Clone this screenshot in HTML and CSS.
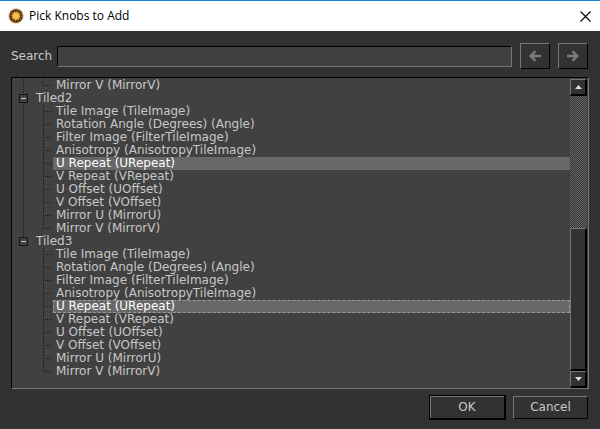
FILE: index.html
```html
<!DOCTYPE html>
<html lang="en" dir="ltr">

<head>
  <meta charset="utf-8">
  <title>Pick Knobs to Add</title>
  <link rel="stylesheet" href="styles.css">
  <meta name="viewport" content="width=device-width, initial-scale=1.0">
</head>

<body>
  <header class="titlebar">
    <svg class="logo" viewBox="0 0 16 16" width="16" height="16" aria-hidden="true">
      <circle cx="8" cy="8" r="7.8" fill="#f3c27a"/>
      <circle cx="8" cy="8" r="6.7" fill="#35281f"/>
      <circle cx="8" cy="8" r="5.2" fill="none" stroke="#b98a45" stroke-width="1.6" stroke-dasharray="1 1.720"/>
      <circle cx="8" cy="8" r="4" fill="#f5ac35"/>
      <circle cx="8" cy="8" r="2.2" fill="#ffc655"/>
    </svg>
    <h1>Pick Knobs to Add</h1>
    <button class="close" aria-label="Close">
      <svg viewBox="0 0 11 11" width="11" height="11"><path d="M.5.5l10 10M10.500.5l-10 10" stroke="#000" stroke-width="1.1"/></svg>
    </button>
  </header>
  <main class="dialog">
    <div class="search">
      <label for="search">Search</label>
      <input type="text" id="search">
      <button class="btn nav" aria-label="Previous">
        <svg viewBox="0 0 12 12" width="12" height="12"><path d="M6.500 1.200L1.800 6l4.700 4.800M2 6h10" fill="none" stroke="#7c7c7c" stroke-width="2.400"/></svg>
      </button>
      <button class="btn nav" aria-label="Next">
        <svg viewBox="0 0 12 12" width="12" height="12"><path d="M5.500 1.200L10.200 6l-4.700 4.800M10 6H0" fill="none" stroke="#7c7c7c" stroke-width="2.400"/></svg>
      </button>
    </div>
    <div class="list">
      <ul class="tree">
        <li class="group">
          <ul class="knobs">
            <li><span>Mirror V (MirrorV)</span></li>
          </ul>
        </li>
        <li class="group">
          <div class="node"><button class="toggle" aria-label="Collapse Tiled2"></button>Tiled2</div>
          <ul class="knobs">
            <li><span>Tile Image (TileImage)</span></li>
            <li><span>Rotation Angle (Degrees) (Angle)</span></li>
            <li><span>Filter Image (FilterTileImage)</span></li>
            <li><span>Anisotropy (AnisotropyTileImage)</span></li>
            <li><span class="selected">U Repeat (URepeat)</span></li>
            <li><span>V Repeat (VRepeat)</span></li>
            <li><span>U Offset (UOffset)</span></li>
            <li><span>V Offset (VOffset)</span></li>
            <li><span>Mirror U (MirrorU)</span></li>
            <li><span>Mirror V (MirrorV)</span></li>
          </ul>
        </li>
        <li class="group">
          <div class="node"><button class="toggle" aria-label="Collapse Tiled3"></button>Tiled3</div>
          <ul class="knobs">
            <li><span>Tile Image (TileImage)</span></li>
            <li><span>Rotation Angle (Degrees) (Angle)</span></li>
            <li><span>Filter Image (FilterTileImage)</span></li>
            <li><span>Anisotropy (AnisotropyTileImage)</span></li>
            <li><span class="selected current">U Repeat (URepeat)</span></li>
            <li><span>V Repeat (VRepeat)</span></li>
            <li><span>U Offset (UOffset)</span></li>
            <li><span>V Offset (VOffset)</span></li>
            <li><span>Mirror U (MirrorU)</span></li>
            <li><span>Mirror V (MirrorV)</span></li>
          </ul>
        </li>
      </ul>
      <div class="scrollbar">
        <button class="btn" aria-label="Scroll up">
          <svg viewBox="0 0 7 4" width="7" height="4"><path d="M0 4L3.500 0 7 4z" fill="#ddd"/></svg>
        </button>
        <div class="track">
          <div class="thumb"></div>
        </div>
        <button class="btn" aria-label="Scroll down">
          <svg viewBox="0 0 7 4" width="7" height="4"><path d="M0 0L3.500 4 7 0z" fill="#ddd"/></svg>
        </button>
      </div>
    </div>
    <div class="actions">
      <button class="btn default">OK</button>
      <button class="btn">Cancel</button>
    </div>
  </main>
</body>

</html>
```

FILE: styles.css
```css
* {
  margin: 0;
  padding: 0;
  box-sizing: border-box;
}

body {
  display: flex;
  flex-direction: column;
  height: 100vh;
  background: #323232;
  color: #c8c8c8;
  font: 12px/13px Verdana, "DejaVu Sans", sans-serif;
}

button,
input {
  font: inherit;
  color: inherit;
}

ul {
  list-style: none;
}

.titlebar {
  display: flex;
  align-items: center;
  height: 31px;
  padding: 0 9px 0 8px;
  border-top: 1px solid #1883d7;
  background: #fff;
  color: #000;
}

.titlebar h1 {
  flex: 1;
  margin-left: 5px;
  font: 12px/16px "Segoe UI", "Open Sans", sans-serif;
}

.close {
  display: flex;
  border: none;
  background: none;
}

.dialog {
  display: flex;
  flex: 1;
  flex-direction: column;
  min-height: 0;
  padding: 12px 11px 9px;
}

.btn {
  display: flex;
  align-items: center;
  justify-content: center;
  border: 1px solid #777;
  border-right: 1px solid #000;
  border-bottom: 1px solid #000;
  background: #323232;
}

.search {
  display: flex;
  align-items: center;
  gap: 8px;
  padding-right: 1px;
}

.search label {
  width: 38px;
  white-space: nowrap;
}

.search input {
  flex: 1;
  min-width: 0;
  height: 21px;
  padding: 0 3px;
  border: 1px solid #777;
  border-top-color: #000;
  border-left-color: #000;
  background: #414141;
}

.nav {
  width: 30px;
  height: 26px;
}

.list {
  display: flex;
  flex: 1;
  min-height: 0;
  margin-top: 8px;
  padding: 1px 1px 0 1px;
  border: 1px solid #777;
  border-top-color: #000;
  border-left-color: #000;
  background: #414141;
}

.tree {
  flex: 1;
  overflow: hidden;
}

/* dotted branch line down the left of each group */
.group {
  background: repeating-linear-gradient(#1c1c1c 0 1px, transparent 1px 2px) 10px 0 / 1px 100% no-repeat;
}

.group:last-child {
  background-size: 1px 6px;
}

.node {
  display: flex;
  align-items: center;
  padding-left: 6px;
}

.toggle {
  width: 9px;
  height: 9px;
  margin-right: 8px;
  border: 1px solid #161616;
  background: linear-gradient(#ccc, #ccc) center / 5px 1px no-repeat #414141;
}

.knobs {
  margin-left: 30px;
}

.knobs li {
  padding-left: 10px;
  background:
    repeating-linear-gradient(#1c1c1c 0 1px, transparent 1px 2px) 0 0 / 1px 100% no-repeat,
    repeating-linear-gradient(90deg, #1c1c1c 0 1px, transparent 1px 2px) 0 6px / 9px 1px no-repeat;
}

.knobs li:last-child {
  background-size: 1px 6px, 9px 1px;
}

.knobs span {
  display: block;
  padding-left: 3px;
  white-space: nowrap;
}

.knobs .selected {
  background: #686868;
  color: #fff;
}

.knobs .current {
  outline: 1px dashed #999;
  outline-offset: -1px;
}

.scrollbar {
  display: flex;
  flex-direction: column;
  width: 17px;
}

.scrollbar .btn {
  height: 17px;
  border-right-width: 2px;
  border-bottom-width: 2px;
}

.track {
  display: flex;
  flex: 1;
  flex-direction: column;
  justify-content: flex-end;
  background: repeating-conic-gradient(#333 0 25%, #686868 0 50%) 0 0 / 2px 2px;
}

.thumb {
  height: 52%;
  border: 1px solid #777;
  border-right: 2px solid #000;
  border-bottom: 2px solid #000;
  background: #323232;
}

.actions {
  display: flex;
  justify-content: flex-end;
  align-items: center;
  gap: 7px;
  margin-top: 6px;
  padding-right: 1px;
}

.actions .btn {
  width: 75px;
  height: 23px;
}

.actions .default {
  width: 77px;
  height: 25px;
  border: 1px solid #000;
  border-right-width: 2px;
  border-bottom-width: 2px;
  box-shadow: inset 1px 1px #777;
}
```
